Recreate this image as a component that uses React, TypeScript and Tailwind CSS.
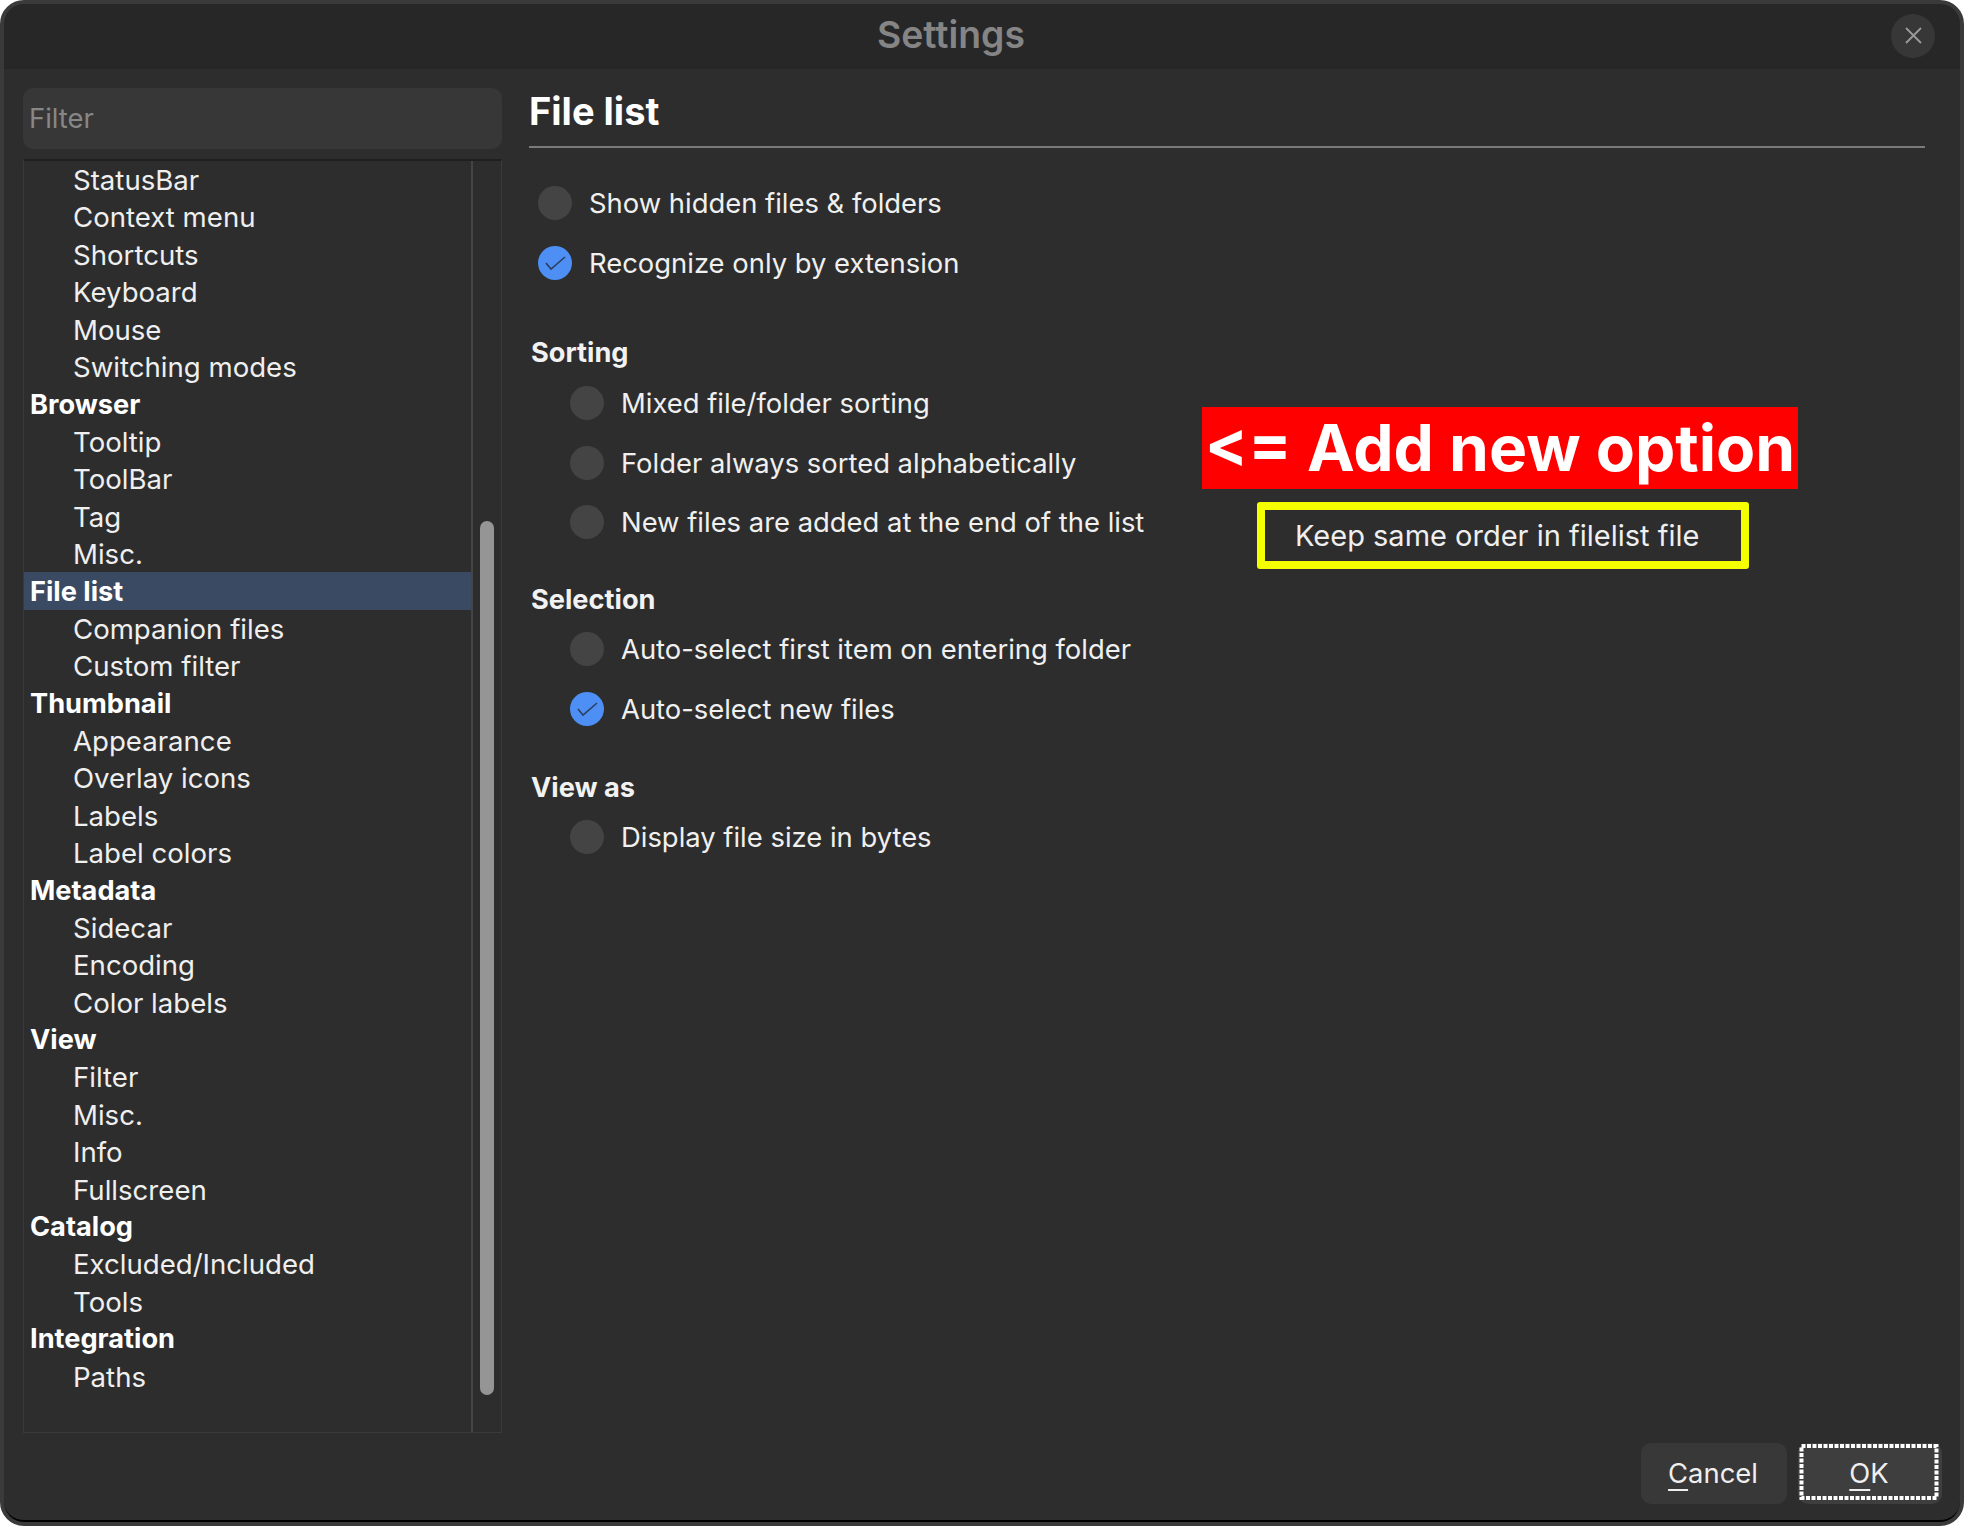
const navItems: [string, boolean][] = [
  ["StatusBar", false],
  ["Context menu", false],
  ["Shortcuts", false],
  ["Keyboard", false],
  ["Mouse", false],
  ["Switching modes", false],
  ["Browser", true],
  ["Tooltip", false],
  ["ToolBar", false],
  ["Tag", false],
  ["Misc.", false],
  ["File list", true],
  ["Companion files", false],
  ["Custom filter", false],
  ["Thumbnail", true],
  ["Appearance", false],
  ["Overlay icons", false],
  ["Labels", false],
  ["Label colors", false],
  ["Metadata", true],
  ["Sidecar", false],
  ["Encoding", false],
  ["Color labels", false],
  ["View", true],
  ["Filter", false],
  ["Misc.", false],
  ["Info", false],
  ["Fullscreen", false],
  ["Catalog", true],
  ["Excluded/Included", false],
  ["Tools", false],
  ["Integration", true],
  ["Paths", false],
];

function Radio({ label, checked, className }: { label: string; checked?: boolean; className: string }) {
  return (
    <div className={`flex h-[34px] items-center gap-[17px] text-[27.4px] text-[#f0f0f0] ${className}`}>
      {checked ? (
        <span className="h-[34px] w-[34px] rounded-full bg-[#4d8ff5]">
          <svg viewBox="0 0 34 34" className="h-[34px] w-[34px]" fill="none">
            <path d="M8 17l5 6L27 11" stroke="#2d3f5e" strokeWidth="1.6" />
          </svg>
        </span>
      ) : (
        <span className="h-[34px] w-[34px] rounded-full bg-[#444444]" />
      )}
      <span className="pt-[2px]">{label}</span>
    </div>
  );
}

function SectionTitle({ label, className }: { label: string; className: string }) {
  return <div className={`flex h-[34px] items-center pl-[2px] pt-[1px] text-[27.2px] font-bold text-[#f2f2f2] ${className}`}>{label}</div>;
}

export default function App() {
  return (
    <div className="relative h-[1528px] w-[1966px] bg-white font-['Inter',sans-serif]">
      <div className="h-[1526px] w-[1964px] overflow-hidden rounded-[24px] border-4 border-[#3a3a3a] bg-[#2d2d2d]">
        <div className="flex h-[1518px] flex-col overflow-hidden rounded-[20px] border-b-2 border-black">
          {/* title bar */}
          <div className="flex h-[65px] shrink-0 items-center bg-[#272727] pr-[25px]">
            <div className="flex-1 pb-[3px] pl-[7px] text-center text-[37.3px] font-semibold text-[#858585]">Settings</div>
            <button className="mb-[2px] flex h-[44px] w-[44px] items-center justify-center rounded-full bg-[#373737]">
              <svg viewBox="0 0 17 17" className="h-[17px] w-[17px]" fill="none">
                <path d="M1 1l15 15M16 1L1 16" stroke="#9a9a9a" strokeWidth="1.8" />
              </svg>
            </button>
          </div>

          <div className="flex h-[1364px] shrink-0 pl-[19px] pt-[19px]">
            {/* sidebar */}
            <div className="flex w-[479px] shrink-0 flex-col">
              <div className="flex h-[61px] items-center rounded-[10px] bg-[#373737] px-[6px] pt-[1px] text-[27.4px] text-[#878787]">Filter</div>
              <div className="mt-[10px] flex h-[1274px] border-x border-b border-t-2 border-x-[#3a3a3a] border-b-[#3a3a3a] border-t-[#1f1f1f]">
                <div className="w-[449px] shrink-0 border-r-2 border-[#444444]">
                  {navItems.map(([label, head], i) => (
                    <div
                      key={i}
                      className={`flex h-[37.4px] items-center whitespace-nowrap pt-[2px] ${
                        head ? "pl-[6px] text-[27.2px] font-bold text-white" : "pl-[49px] text-[27.6px] text-[#efefef]"
                      } ${label === "File list" ? "bg-[#3a4a63]" : ""}`}
                    >
                      {label}
                    </div>
                  ))}
                </div>
                <div className="flex-1 pl-[7px] pt-[360px]">
                  <div className="h-[874px] w-[14px] rounded-full bg-[#959595]" />
                </div>
              </div>
            </div>

            {/* settings panel */}
            <div className="ml-[27px] w-[1396px] shrink-0">
              <div className="flex h-[60px] items-center border-b-2 border-[#7a7a7a] pb-[11px] text-[38px] font-bold text-white">File list</div>
              <Radio className="ml-[9px] mt-[38px]" label="Show hidden files & folders" />
              <Radio className="ml-[9px] mt-[26px]" label="Recognize only by extension" checked />

              <SectionTitle className="mt-[56px]" label="Sorting" />
              <Radio className="ml-[41px] mt-[16px]" label="Mixed file/folder sorting" />
              <Radio className="ml-[41px] mt-[26px]" label="Folder always sorted alphabetically" />
              <Radio className="ml-[41px] mt-[25px]" label="New files are added at the end of the list" />

              <SectionTitle className="mt-[44px]" label="Selection" />
              <Radio className="ml-[41px] mt-[15px]" label="Auto-select first item on entering folder" />
              <Radio className="ml-[41px] mt-[26px]" label="Auto-select new files" checked />

              <SectionTitle className="mt-[45px]" label="View as" />
              <Radio className="ml-[41px] mt-[15px]" label="Display file size in bytes" />
            </div>
          </div>

          {/* footer buttons */}
          <div className="mt-[10px] flex justify-end gap-[11px] pr-[18px]">
            <button className="flex h-[61px] w-[146px] items-center justify-center rounded-[10px] bg-[#383838] pr-[2px] text-[27.4px] text-[#efefef]">
              <span>
                <span className="underline decoration-2 underline-offset-[6px]">C</span>ancel
              </span>
            </button>
            <button className="relative flex h-[61px] w-[144px] items-center justify-center rounded-[10px] bg-[#3e3e3e] pr-[2px] text-[27.4px] text-[#efefef]">
              <span>
                <span className="underline decoration-2 underline-offset-[6px]">O</span>K
              </span>
              <svg className="absolute inset-0 h-[61px] w-[144px]" fill="none">
                <rect x="3.5" y="3" width="135" height="52" stroke="#ffffff" strokeWidth="4" strokeDasharray="4 1.5" />
              </svg>
            </button>
          </div>
        </div>
      </div>

      {/* annotations pasted over the dialog */}
      <div className="absolute left-[1202px] top-[407px] flex h-[82px] w-[596px] items-center justify-center bg-[#ff0000] text-[64px] font-bold whitespace-nowrap text-white">
        {"<= Add new option"}
      </div>
      <div className="absolute left-[1257px] top-[502px] flex h-[67px] w-[492px] items-center rounded-[3px] border-8 border-[#f5ff00] pl-[30px] pt-[1px] text-[29px] text-[#efefef]">
        Keep same order in filelist file
      </div>
    </div>
  );
}
